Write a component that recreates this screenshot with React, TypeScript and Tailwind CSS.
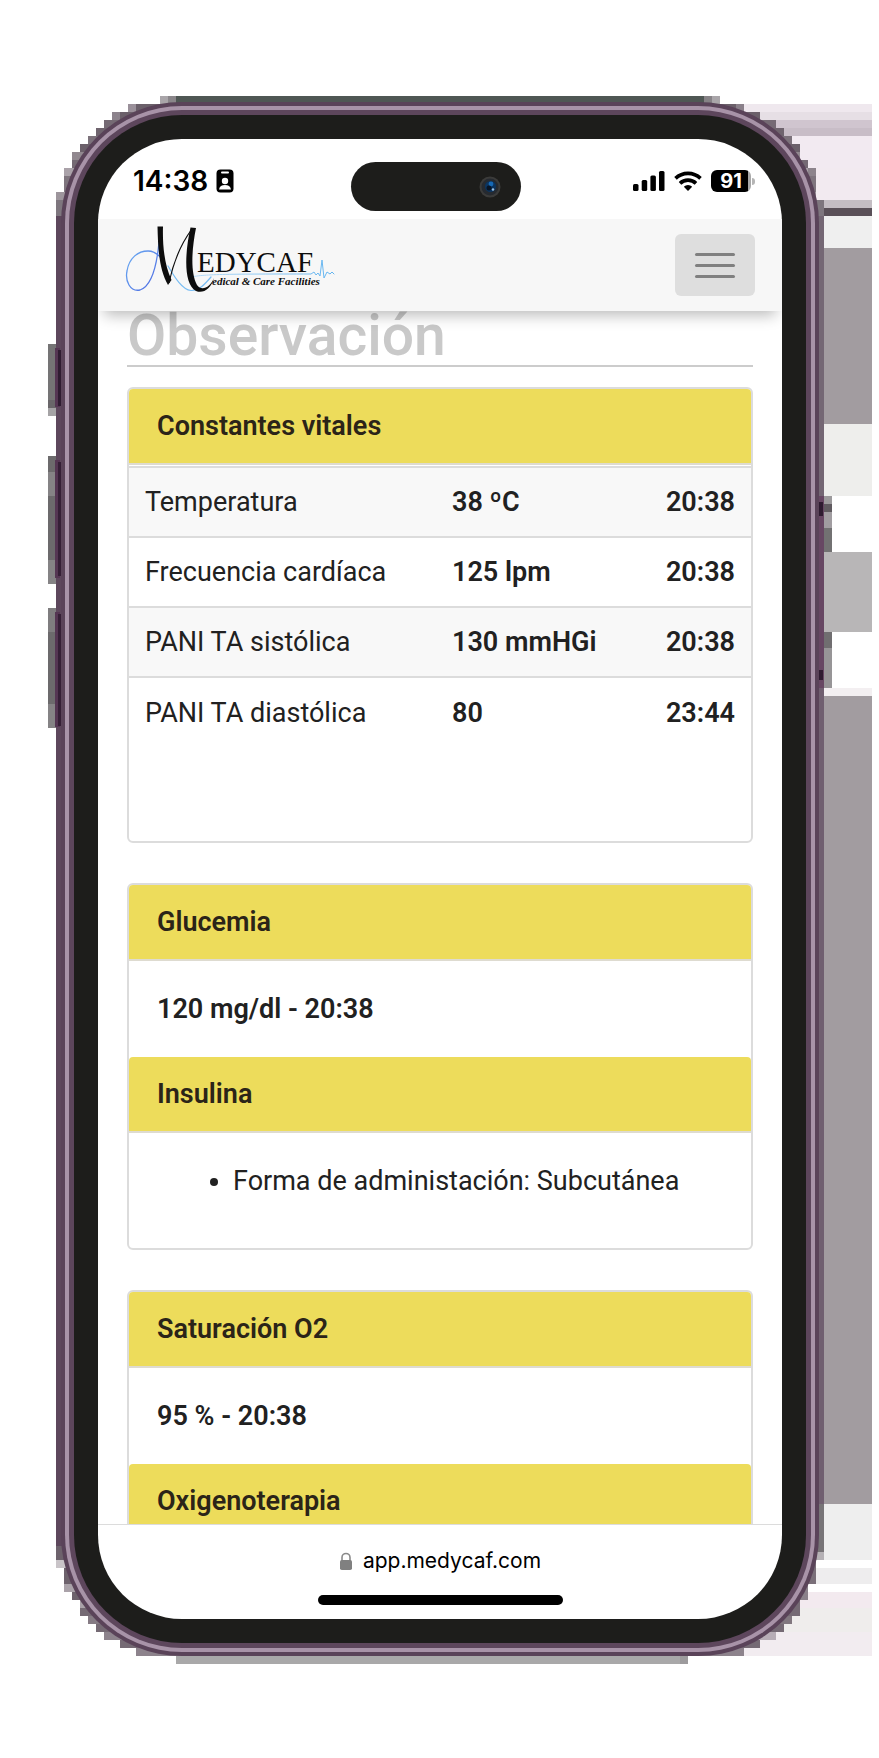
import React from 'react';

type Vital = { name: string; value: string; time: string };

const vitals: Vital[] = [
  { name: 'Temperatura', value: '38 ºC', time: '20:38' },
  { name: 'Frecuencia cardíaca', value: '125 lpm', time: '20:38' },
  { name: 'PANI TA sistólica', value: '130 mmHGi', time: '20:38' },
  { name: 'PANI TA diastólica', value: '80', time: '23:44' },
];

type Block = [x: number, y: number, w: number, h: number, fill: string];

// Pale bands to the right of the phone.
const bands: Block[] = [
  [740, 104, 132, 8, '#efe8ee'],
  [750, 112, 122, 8, '#e6dfe5'],
  [760, 120, 112, 8, '#d0c5cf'],
  [770, 128, 102, 8, '#c8bdc7'],
  [780, 136, 92, 32, '#f2eaf1'],
  [800, 168, 72, 32, '#f2eaf0'],
  [816, 200, 56, 8, '#c4bdc3'],
  [816, 208, 56, 8, '#5a5058'],
  [816, 216, 56, 32, '#efefef'],
  [816, 248, 56, 176, '#a29ca0'],
  [816, 424, 56, 72, '#eeeeec'],
  [816, 552, 56, 80, '#b8b6b7'],
  [816, 688, 56, 8, '#f3eff1'],
  [816, 696, 56, 808, '#a29ca0'],
  [816, 1504, 56, 56, '#eeeeee'],
  [808, 1568, 64, 16, '#eeedee'],
  [800, 1592, 72, 16, '#f3eaef'],
  [780, 1608, 92, 24, '#efedec'],
  [740, 1632, 132, 24, '#f2ecf0'],
];

// Stepped shadow hugging the rounded body: each row spans x to x + w.
const steps: Block[] = [
  [160, 96, 8, 8, '#a9a5a9'],
  [168, 96, 8, 8, '#8a868a'],
  [176, 96, 528, 8, '#4f5754'],
  [704, 96, 8, 8, '#868286'],
  [712, 96, 8, 8, '#a9a5a9'],
  [128, 104, 8, 8, '#9a909a'],
  [136, 104, 600, 8, '#6b606a'],
  [736, 104, 8, 8, '#8a808a'],
  [112, 112, 8, 8, '#8c838c'],
  [120, 112, 640, 8, '#6b606a'],
  [104, 120, 672, 8, '#756a74'],
  [96, 128, 688, 8, '#6f646e'],
  [88, 136, 704, 8, '#7c727b'],
  [80, 144, 720, 8, '#6b606a'],
  [72, 152, 728, 8, '#91888f'],
  [72, 160, 736, 8, '#756a74'],
  [64, 168, 744, 8, '#aaa2a9'],
  [808, 168, 8, 8, '#8d848c'],
  [64, 176, 752, 16, '#7f757e'],
  [56, 192, 760, 8, '#9d959c'],
  [56, 200, 768, 16, '#7e767e'],
  [56, 216, 10, 1330, '#5d475c'],
  [815, 216, 9, 280, '#746774'],
  [815, 496, 9, 192, '#674763'],
  [815, 688, 9, 816, '#705f70'],
  [815, 1504, 9, 48, '#777477'],
  [56, 1546, 20, 14, '#6d626c'],
  [56, 1560, 20, 8, '#c9c4c8'],
  [64, 1568, 20, 16, '#6d626c'],
  [64, 1584, 20, 8, '#aaa2a9'],
  [72, 1592, 20, 8, '#6d626c'],
  [80, 1600, 20, 8, '#a9a1a8'],
  [80, 1608, 30, 8, '#756a74'],
  [88, 1616, 30, 8, '#857b84'],
  [96, 1624, 30, 8, '#756a74'],
  [104, 1632, 40, 8, '#8d838c'],
  [120, 1640, 60, 8, '#756a74'],
  [136, 1648, 60, 8, '#8d838c'],
  [176, 1656, 504, 8, '#a9a8a9'],
  [680, 1656, 8, 8, '#9d9b9d'],
  [796, 1552, 28, 8, '#b5b1b5'],
  [796, 1560, 20, 24, '#7a6f79'],
  [788, 1584, 20, 16, '#8a808a'],
  [780, 1600, 20, 16, '#756a74'],
  [762, 1616, 30, 8, '#81777f'],
  [754, 1624, 30, 8, '#756a74'],
  [736, 1632, 40, 8, '#b7adb6'],
  [710, 1640, 50, 8, '#756a74'],
  [690, 1648, 54, 8, '#8d838c'],
];

// Side keys and the grey edges around them.
const keys: Block[] = [
  [48, 344, 8, 56, '#757475'],
  [48, 400, 8, 8, '#696669'],
  [48, 408, 8, 8, '#a5a3a5'],
  [48, 456, 8, 16, '#6c6a6c'],
  [48, 472, 8, 24, '#858385'],
  [48, 496, 8, 64, '#6c6a6c'],
  [48, 560, 8, 24, '#858385'],
  [48, 608, 8, 24, '#7f7d7f'],
  [48, 632, 8, 72, '#6c6a6c'],
  [48, 704, 8, 24, '#858385'],
  [55, 348, 5, 59, '#553653'],
  [58, 350, 3, 56, '#2f1c31'],
  [55, 460, 5, 118, '#553653'],
  [58, 462, 3, 114, '#351f36'],
  [55, 612, 5, 115, '#553653'],
  [58, 614, 3, 112, '#351f36'],
  [824, 496, 8, 8, '#9c9a9c'],
  [824, 504, 8, 8, '#605b60'],
  [824, 512, 8, 16, '#a19da1'],
  [824, 528, 8, 24, '#727172'],
  [824, 632, 8, 16, '#706e70'],
  [824, 648, 8, 40, '#979597'],
  [819, 502, 4, 14, '#2f1c31'],
  [819, 670, 4, 10, '#2f1c31'],
];

function Blocks({ items }: { items: Block[] }) {
  return (
    <>
      {items.map(([x, y, w, h, fill]) => (
        <rect key={`${x}-${y}`} x={x} y={y} width={w} height={h} fill={fill} />
      ))}
    </>
  );
}

function Backdrop() {
  return (
    <svg
      className="absolute inset-0 h-full w-full"
      viewBox="0 0 879 1758"
      preserveAspectRatio="none"
      shapeRendering="crispEdges"
      aria-hidden="true"
    >
      <Blocks items={bands} />
      <Blocks items={steps} />
      <Blocks items={keys} />
    </svg>
  );
}

function StatusBar() {
  return (
    <div className="grid h-20 grid-cols-[218px_170px_1fr] items-start pt-[23px] pr-[27px] pl-[35px] font-['Inter',sans-serif] text-black">
      <div className="flex h-[38px] items-center gap-2">
        <span className="text-[28px] leading-8 font-semibold">14:38</span>
        <svg width="18" height="24" viewBox="0 0 18 24" aria-hidden="true">
          <rect x="0.5" y="0.5" width="17" height="23" rx="4" fill="#000" />
          <rect x="5" y="2.5" width="8" height="2" rx="1" fill="#fff" />
          <circle cx="9" cy="12" r="3.2" fill="#fff" />
          <path d="M3 20.5c.4-3.200 2.800-4.600 6-4.600s5.600 1.400 6 4.600z" fill="#fff" />
        </svg>
      </div>
      <div className="flex h-[49px] items-center justify-end rounded-full bg-[#1d1d1b] pr-5">
        <svg width="22" height="22" viewBox="0 0 22 22" aria-hidden="true">
          <circle cx="11" cy="11" r="10.500" fill="#3b3b3a" />
          <circle cx="11" cy="11" r="8.500" fill="#262a30" />
          <circle cx="11.500" cy="10.500" r="5.500" fill="#0c3560" />
          <circle cx="12" cy="8" r="2.400" fill="#1769b5" />
          <circle cx="10" cy="12" r="2.500" fill="#071426" />
          <circle cx="14" cy="13.500" r="1.200" fill="#9fc3e6" />
        </svg>
      </div>
      <div className="flex h-[38px] items-center justify-end gap-[9px]">
        <svg width="32" height="20" viewBox="0 0 32 20" aria-hidden="true">
          <rect x="0" y="13" width="5.500" height="7" rx="1.500" />
          <rect x="8.700" y="9" width="5.500" height="11" rx="1.500" />
          <rect x="17.400" y="4.500" width="5.500" height="15.500" rx="1.500" />
          <rect x="26" y="0" width="5.500" height="20" rx="1.500" />
        </svg>
        <svg width="28" height="20" viewBox="0 0 28 20" fill="none" stroke="#000" strokeWidth="3.600" aria-hidden="true">
          <path d="M1.500 7.400a18 18 0 0 1 25 0" />
          <path d="M6 12.400a11.500 11.500 0 0 1 16 0" />
          <path d="M14 20l-4.200-4.300a6 6 0 0 1 8.400 0z" fill="#000" stroke="none" />
        </svg>
        <div className="flex items-center gap-px">
          <span className="flex h-[22px] w-10 items-center justify-center rounded-md bg-[linear-gradient(90deg,#000_92%,#a8a8a8_92%)] text-[20px] leading-[22px] font-bold text-white">
            91
          </span>
          <span className="h-[7px] w-[3px] rounded-r-full bg-[#b5b5b5]" />
        </div>
      </div>
    </div>
  );
}

function Logo() {
  return (
    <svg width="210" height="68" viewBox="0 0 210 68" role="img" aria-label="Medycaf, Medical & Care Facilities">
      <defs>
        <linearGradient id="loop" x1="0" y1="0" x2="1" y2="1">
          <stop offset="0" stopColor="#6db4f4" />
          <stop offset="1" stopColor="#4a62e0" />
        </linearGradient>
        <linearGradient id="pulse" x1="0" y1="0" x2="1" y2="0">
          <stop offset="0" stopColor="#b9dcf6" />
          <stop offset="1" stopColor="#62b4f0" />
        </linearGradient>
      </defs>
      <g fill="none" strokeLinecap="round">
        <path d="M34 18C32 40 27 62 15 66C5 68 0 57 2 47C4 34 13 27 23 27C29 27 33 30 37 35" stroke="url(#loop)" strokeWidth="1.300" />
        <path d="M43 42C49 52 57 66 66 66.500C74 67 80 60 86 53" stroke="#79bdf3" strokeWidth="1.200" />
        <path d="M66 53C80 50 105 50 186 50L189 48L191 51L193 49L195 52L197 36L199 54L202 48L205 50L207 48L209 50" stroke="url(#pulse)" strokeWidth="1" />
      </g>
      <path d="M32.500 2.500L38 2.500C37.500 20 39 40 46.500 56L43 61C34 45 33 24 32.500 2.500Z" fill="#0d0d0d" />
      <path d="M44 59C48 40 55 21 67 5" fill="none" stroke="#0d0d0d" strokeWidth="1.200" />
      <path d="M65.500 3.500L71 4C67 24 65 48 72 61C77 68 85 63 89 54C86 65 78 70 71 67C58 60 60 28 65.500 3.500Z" fill="#0d0d0d" />
      <text x="72" y="48" fontSize="29" fill="#0d0d0d" className="font-['Liberation_Serif',serif]">EDYCAF</text>
      <text x="87" y="61" fontSize="11" fill="#0d0d0d" className="font-['Liberation_Serif',serif] font-bold italic">edical &amp; Care Facilities</text>
    </svg>
  );
}

function NavBar() {
  return (
    <header className="relative z-10 flex h-[92px] items-center justify-between bg-[#f7f7f7] pr-[27px] pl-[27px] shadow-[0_10px_14px_-6px_rgba(0,0,0,0.28)]">
      <a href="#inicio" className="-mt-3.5">
        <Logo />
      </a>
      <button type="button" aria-label="Menú" className="flex h-[62px] w-20 flex-col items-center justify-center gap-2 rounded-md bg-[#dedede]">
        <span className="h-[3px] w-10 rounded-full bg-[#808080]" />
        <span className="h-[3px] w-10 rounded-full bg-[#808080]" />
        <span className="h-[3px] w-10 rounded-full bg-[#808080]" />
      </button>
    </header>
  );
}

function Card({ children, open = false }: { children: React.ReactNode; open?: boolean }) {
  return (
    <section
      className={
        open
          ? 'rounded-t-md border-2 border-b-0 border-[#dcdcdc]'
          : 'rounded-md border-2 border-[#dcdcdc]'
      }
    >
      {children}
    </section>
  );
}

function CardHeader({ children }: { children: React.ReactNode }) {
  return (
    <h2 className="flex h-[76px] items-center rounded-t-sm border-b-2 border-[#dedbd0] bg-[#eddc5b] px-7 font-semibold text-[#2b2418]">
      {children}
    </h2>
  );
}

function Reading({ children }: { children: React.ReactNode }) {
  return <p className="flex h-24 items-center px-7 font-semibold">{children}</p>;
}

export default function App() {
  return (
    <div className="relative bg-white pt-[102px] pr-[60px] pb-[102px] pl-[61px] font-['Roboto',sans-serif] text-[27px] leading-9 text-[#212121]">
      <Backdrop />
      <div className="relative rounded-[121px] bg-[#5a4359] p-1">
        <div className="rounded-[117px] bg-[#a893a8] p-1">
          <div className="rounded-[113px] bg-[#5d465c] p-[5px]">
            <div className="rounded-[108px] bg-[#1d1d1b] p-6">
              <div className="overflow-hidden rounded-[84px] bg-white">
                <StatusBar />
                <NavBar />
                <main className="px-[29px]">
                  <h1 className="border-b-2 border-[#cccccc] pb-1 text-[57px] leading-[50px] font-medium text-[#c9c9c9]">
                    Observación
                  </h1>

                  <div className="flex flex-col gap-10 pt-5">
                    <Card>
                      <CardHeader>Constantes vitales</CardHeader>
                      <table className="mt-px mb-[94px] w-full border-collapse">
                        <tbody>
                          {vitals.map((v) => (
                            <tr key={v.name} className="h-[70px] border-t-2 border-[#dcdcdc] odd:bg-[#f8f8f8]">
                              <th scope="row" className="w-1/2 pl-4 text-left font-normal">{v.name}</th>
                              <td className="pl-3 font-semibold">{v.value}</td>
                              <td className="pr-4 text-right font-semibold">{v.time}</td>
                            </tr>
                          ))}
                        </tbody>
                      </table>
                    </Card>

                    <Card>
                      <CardHeader>Glucemia</CardHeader>
                      <Reading>120 mg/dl - 20:38</Reading>
                      <CardHeader>Insulina</CardHeader>
                      <ul className="list-disc pt-[30px] pr-7 pb-[49px] pl-[104px]">
                        <li>Forma de administación: Subcutánea</li>
                      </ul>
                    </Card>

                    <Card open>
                      <CardHeader>Saturación O2</CardHeader>
                      <Reading>95 % - 20:38</Reading>
                      <div className="h-[60px] overflow-hidden">
                        <CardHeader>Oxigenoterapia</CardHeader>
                      </div>
                    </Card>
                  </div>
                </main>
                <footer className="flex flex-col items-center border-t border-[#dcdcdc] pt-[18px] pb-[14px] font-['Inter',sans-serif] text-[21px] text-black">
                  <a href="https://app.medycaf.com" className="flex items-center gap-[10px]">
                    <svg width="14" height="18" viewBox="0 0 14 18" aria-hidden="true">
                      <path d="M3 9V5.500a4 4 0 0 1 8 0V9" fill="none" stroke="#8a8a8a" strokeWidth="1.600" />
                      <rect x="1" y="8" width="12" height="10" rx="1.800" fill="#808080" />
                    </svg>
                    app.medycaf.com
                  </a>
                  <span className="mt-4 h-[10px] w-[245px] rounded-full bg-black" />
                </footer>
              </div>
            </div>
          </div>
        </div>
      </div>
    </div>
  );
}
